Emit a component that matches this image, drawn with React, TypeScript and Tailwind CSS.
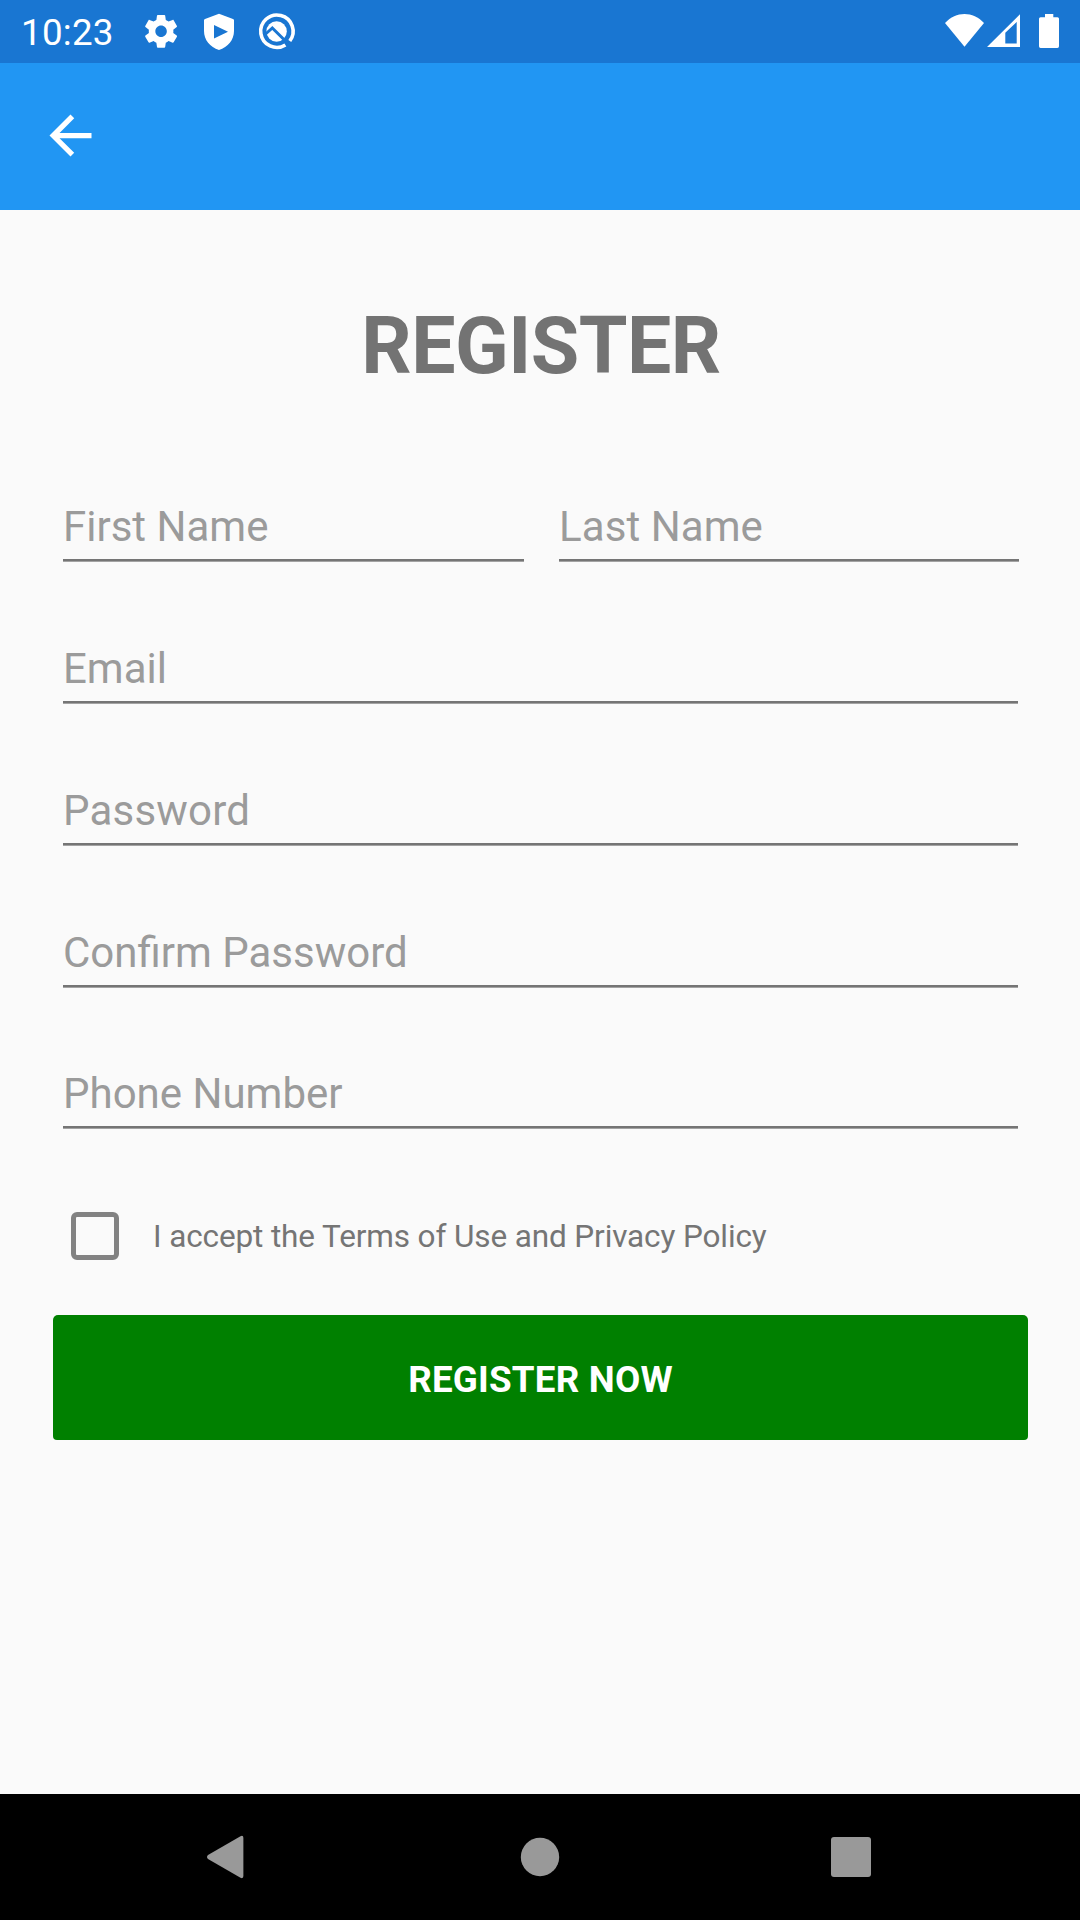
import React from "react";

function StatusBar() {
  return (
    <header className="flex h-[63px] items-start bg-[#1976d2] text-white">
      <span className="ml-[21px] mt-[11px] h-[44px] w-[121px] text-[36.75px] leading-[44px] tracking-[0.25px]">10:23</span>
      <svg className="h-[63px] w-[160px]" viewBox="142 0 160 63" fill="currentColor">
        <path
          transform="translate(141.4 11.6) scale(1.64)"
          d="M19.43 12.98c.04-.32.07-.64.07-.98s-.03-.66-.07-.98l2.11-1.65c.19-.15.24-.42.12-.64l-2-3.46c-.12-.22-.39-.3-.61-.22l-2.49 1c-.52-.4-1.08-.73-1.69-.98l-.38-2.65C14.46 2.18 14.25 2 14 2h-4c-.25 0-.46.18-.49.42l-.38 2.65c-.61.25-1.17.59-1.69.98l-2.49-1c-.23-.09-.49 0-.61.22l-2 3.46c-.13.22-.07.49.12.64l2.11 1.65c-.04.32-.07.65-.07.98s.03.66.07.98l-2.11 1.65c-.19.15-.24.42-.12.64l2 3.46c.12.22.39.3.61.22l2.49-1c.52.4 1.08.73 1.69.98l.38 2.65c.03.24.24.42.49.42h4c.25 0 .46-.18.49-.42l.38-2.65c.61-.25 1.17-.59 1.69-.98l2.49 1c.23.09.49 0 .61-.22l2-3.46c.12-.22.07-.49-.12-.64l-2.11-1.65zM12 15.5c-1.93 0-3.5-1.57-3.5-3.5s1.57-3.5 3.5-3.5 3.5 1.57 3.5 3.5-1.57 3.5-3.5 3.5z"
        />
        <path
          fillRule="evenodd"
          d="M219 13.7L233 19Q234 19.4 234 20.5V31C234 40 228 47 219 50C210 47 204 40 204 31V20.5Q204 19.4 205 19ZM214 25V38.5L228 31.8Z"
        />
        <path fill="none" stroke="currentColor" strokeWidth="3.6" d="M285.4 45A16.2 16.2 0 1 1 289.8 41" />
        <circle cx="276.6" cy="31.5" r="10.2" />
        <path d="M264.5 35L272.3 28L287.5 43" fill="none" stroke="#1976d2" strokeWidth="3" />
      </svg>
      <svg className="ml-auto h-[63px] w-[140px]" viewBox="940 0 140 63" fill="currentColor">
        <path d="M964.5 46.8L945 23C956 11 973 11 984 23Z" />
        <path fillRule="evenodd" d="M987 47L1020 14.3V47ZM1005.3 32.7V43.5H1016.7V22Z" />
        <path d="M1045 14H1053.3V17.3H1057.5Q1059 17.3 1059 18.8V46.3Q1059 48 1057.4 48H1040.6Q1039 48 1039 46.3V18.8Q1039 17.3 1040.6 17.3H1045Z" />
      </svg>
    </header>
  );
}

function Field({ label, tracking = "tracking-normal" }: { label: string; tracking?: string }) {
  return (
    <div className="flex h-[60px] flex-col">
      <span className={`h-[57px] text-[42px] leading-[50px] text-[#9b9b9b] ${tracking}`}>{label}</span>
      <div className="h-[3px] border-b border-[#a3a3a3] bg-[#757575]" />
    </div>
  );
}

export default function App() {
  return (
    <div className="flex h-[1920px] w-[1080px] flex-col overflow-hidden bg-[#fafafa] font-['Roboto',sans-serif]">
      <StatusBar />
      <nav className="flex h-[147px] items-start bg-[#2196f3] pl-[39px] pt-[41px] text-white">
        <svg className="size-[63px]" viewBox="0 0 24 24" fill="currentColor">
          <path d="M20 11H7.83l5.59-5.59L12 4l-8 8 8 8 1.41-1.41L7.83 13H20v-2z" />
        </svg>
      </nav>

      <main className="flex flex-1 flex-col">
        <h1 className="mt-[90px] pl-[2px] text-center text-[78.75px] font-bold leading-[92px] tracking-[-0.5px] text-[#737373]">
          REGISTER
        </h1>

        <form className="flex flex-col">
          <div className="mt-[110px] grid grid-cols-[461px_460px] gap-x-[35px] pl-[63px]">
            <Field label="First Name" />
            <Field label="Last Name" tracking="tracking-[0.08px]" />
          </div>
          <div className="ml-[63px] mt-[82px] flex w-[955px] flex-col gap-[82px]">
            <Field label="Email" />
            <Field label="Password" tracking="tracking-[0.2px]" />
            <Field label="Confirm Password" />
          </div>
          <div className="ml-[63px] mt-[81px] w-[955px]">
            <Field label="Phone Number" />
          </div>

          <label className="ml-[71px] mt-[83px] flex h-[48px] items-center">
            <span className="size-[48px] rounded-[6px] border-[5px] border-[#828282]" />
            <span className="ml-[34px] pt-[2px] text-[31.5px] leading-[38px] tracking-[-0.12px] text-[#757575]">
              I accept the Terms of Use and Privacy Policy
            </span>
          </label>

          <button
            type="button"
            className="ml-[53px] mt-[55px] h-[125px] w-[975px] rounded-t-[5px] rounded-b-[4px] bg-[#008000] pt-[4px] text-[36.75px] font-bold leading-[44px] tracking-[0.2px] text-white"
          >
            REGISTER NOW
          </button>
        </form>
      </main>

      <footer className="h-[126px] bg-black">
        <svg className="h-[126px] w-[1080px]" viewBox="0 1794 1080 126" fill="#999999">
          <path d="M208 1855L240.5 1836.2Q243.4 1835 243.4 1838V1876Q243.4 1879 240.5 1877.8L208 1859Q206 1857 208 1855Z" />
          <circle cx="540" cy="1857" r="19.2" />
          <rect x="831" y="1837" width="40" height="40" rx="3" />
        </svg>
      </footer>
    </div>
  );
}
